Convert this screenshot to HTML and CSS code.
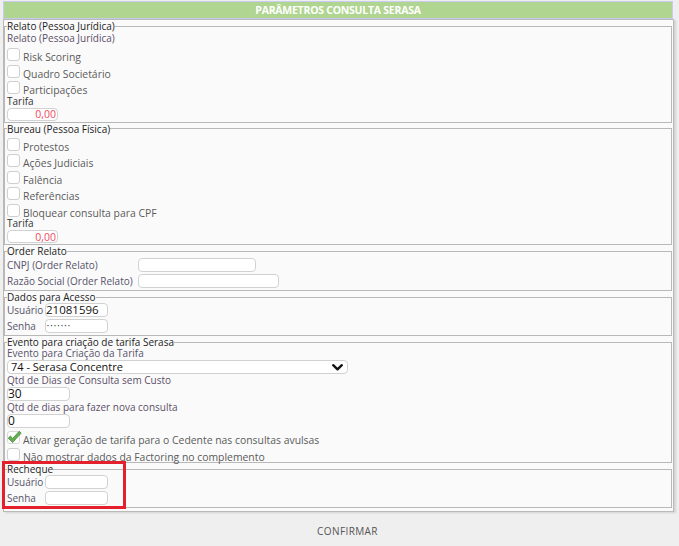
FILE: index.html
```html
<!DOCTYPE html>
<html lang="pt-BR">
<head>
<meta charset="utf-8">
<title>Parâmetros Consulta Serasa</title>
<link rel="stylesheet" href="styles.css">
</head>
<body>
<div class="page">
  <div class="header">PARÂMETROS CONSULTA SERASA</div>
  <div class="panel">
    <fieldset class="fs">
      <legend>Relato (Pessoa Jurídica)</legend>
      <div class="lbl lbl-purple">Relato (Pessoa Jurídica)</div>
      <div class="chk"><span class="cb"></span>Risk Scoring</div>
      <div class="chk"><span class="cb"></span>Quadro Societário</div>
      <div class="chk"><span class="cb"></span>Participações</div>
      <div class="lbl lbl-dark">Tarifa</div>
      <div class="inp inp-money">0,00</div>
    </fieldset>

    <fieldset class="fs">
      <legend>Bureau (Pessoa Física)</legend>
      <div class="chk"><span class="cb"></span>Protestos</div>
      <div class="chk"><span class="cb"></span>Ações Judiciais</div>
      <div class="chk"><span class="cb"></span>Falência</div>
      <div class="chk"><span class="cb"></span>Referências</div>
      <div class="chk"><span class="cb"></span>Bloquear consulta para CPF</div>
      <div class="lbl lbl-dark">Tarifa</div>
      <div class="inp inp-money">0,00</div>
    </fieldset>

    <fieldset class="fs">
      <legend>Order Relato</legend>
      <div class="pairs pairs-wide">
        <span class="plbl">CNPJ (Order Relato)</span><span class="inp inp-cnpj"></span>
        <span class="plbl">Razão Social (Order Relato)</span><span class="inp inp-razao"></span>
      </div>
    </fieldset>

    <fieldset class="fs">
      <legend>Dados para Acesso</legend>
      <div class="pairs pairs-narrow">
        <span class="plbl">Usuário</span><span class="inp inp-short inp-value">21081596</span>
        <span class="plbl">Senha</span><span class="inp inp-short"><span class="dots">•••••••</span></span>
      </div>
    </fieldset>

    <fieldset class="fs">
      <legend>Evento para criação de tarifa Serasa</legend>
      <div class="lbl lbl-first">Evento para Criação da Tarifa</div>
      <div class="inp select">
        <span class="inp-value">74 - Serasa Concentre</span>
        <svg class="chev" width="11" height="7" viewBox="0 0 11 7"><polyline points="1.2,1.2 5.5,5.3 9.8,1.2" fill="none" stroke="#111" stroke-width="2.3" stroke-linecap="round" stroke-linejoin="round"/></svg>
      </div>
      <div class="lbl lbl-purple">Qtd de Dias de Consulta sem Custo</div>
      <div class="inp inp-qtd inp-value">30</div>
      <div class="lbl lbl-purple">Qtd de dias para fazer nova consulta</div>
      <div class="inp inp-qtd inp-value">0</div>
      <div class="chk"><span class="cb cb-on"><svg class="tick" width="15" height="15" viewBox="0 0 15 15"><path d="M1.2 8.2 L3.4 6 L5.6 8.6 L12.2 1.2 L14.2 3.1 L5.6 12.6 Z" fill="#62b04e" stroke="#3f7d33" stroke-width="0.7" stroke-linejoin="round"/></svg></span>Ativar geração de tarifa para o Cedente nas consultas avulsas</div>
      <div class="chk"><span class="cb"></span>Não mostrar dados da Factoring no complemento</div>
    </fieldset>

    <fieldset class="fs">
      <legend>Recheque</legend>
      <div class="pairs pairs-narrow">
        <span class="plbl lbl-purple">Usuário</span><span class="inp inp-short"></span>
        <span class="plbl lbl-purple">Senha</span><span class="inp inp-short"></span>
      </div>
    </fieldset>
  </div>
  <div class="footer"><span class="btn">CONFIRMAR</span></div>
</div>
<div class="highlight"></div>
</body>
</html>
```
FILE: styles.css
```css
* { box-sizing: border-box; }

html, body {
  margin: 0;
  padding: 0;
}

body {
  background: #efefef;
  font-family: "Open Sans", "Liberation Sans", sans-serif;
  font-size: 10px;
  color: #555;
  width: 679px;
  height: 546px;
  overflow: hidden;
  position: relative;
}

.page {
  padding: 1px 0 0 3px;
}

.header {
  width: 670px;
  height: 18px;
  background: #b0d590;
  border: 1px solid #c9cbef;
  color: #fff;
  font-weight: 700;
  font-size: 10.5px;
  letter-spacing: -0.25px;
  line-height: 16px;
  text-align: center;
}

.panel {
  width: 671px;
  background: #fafafa;
  border: 1px solid #b9b9b9;
  padding: 0 1px 3px 0;
  box-shadow: 2px 1px 2px rgba(0, 0, 0, 0.12);
}

.fs {
  margin: 0;
  padding: 0 2px 1px 2px;
  border: 1px solid #b8b8b8;
  min-width: 0;
}

.fs legend {
  padding: 0;
  line-height: 12px;
  color: #1c1c1c;
}

.lbl {
  line-height: 13px;
  color: #555;
}

.lbl-first { line-height: 11px; margin-bottom: 1px; color: #57536a; }
.lbl-purple { color: #5a4f68; }
.lbl-dark { color: #333; }

.chk {
  height: 16.5px;
  line-height: 13px;
  font-size: 10.4px;
  color: #5a5a5a;
  white-space: nowrap;
}

.cb {
  display: inline-block;
  vertical-align: baseline;
  width: 13px;
  height: 13px;
  margin: 3px 3px 0 0;
  border: 1px solid #cfcfcf;
  border-radius: 3px;
  background: #fff;
  position: relative;
}

.cb-on { border-color: #d8d8d8; }

.tick {
  position: absolute;
  left: -1px;
  top: -2px;
}

.inp {
  display: flex;
  align-items: center;
  height: 14px;
  background: #fff;
  border: 1px solid #d2d2d2;
  border-radius: 4px;
  color: #111;
}

.inp-money {
  width: 51px;
  height: 13px;
  justify-content: flex-end;
  padding-right: 1px;
  color: #f04a5c;
  font-size: 10.5px;
}

.inp-value {
  font-size: 11.5px;
  color: #111;
  line-height: 12px;
}

.inp-qtd { width: 63px; font-size: 12px; }

.select {
  width: 341px;
  justify-content: space-between;
  padding: 0 4px 0 3px;
  margin-bottom: 0;
}

.select .inp-value { font-size: 11px; }

.chev { display: block; }

.pairs {
  display: grid;
  column-gap: 1px;
  row-gap: 2px;
  align-items: center;
  padding: 1px 0 1px;
}

.pairs-wide { grid-template-columns: 130px max-content; }
.pairs-narrow { grid-template-columns: 37px max-content; padding-top: 0; }

.plbl {
  line-height: 13px;
  color: #57536a;
  white-space: nowrap;
}

.inp-cnpj { width: 118px; }
.inp-razao { width: 141px; }
.inp-short { width: 63px; }

.dots {
  font-size: 5px;
  letter-spacing: 1.6px;
  color: #222;
  padding-left: 1px;
  line-height: 5px;
}

.footer {
  height: 34px;
  padding-left: 13px;
  display: flex;
  align-items: center;
  justify-content: center;
}

.btn {
  font-size: 10px;
  letter-spacing: 0.4px;
  color: #555;
  margin-top: 3px;
}

.highlight {
  position: absolute;
  left: 2px;
  top: 461px;
  width: 124px;
  height: 48px;
  border: 3px solid #e3202c;
}
```
